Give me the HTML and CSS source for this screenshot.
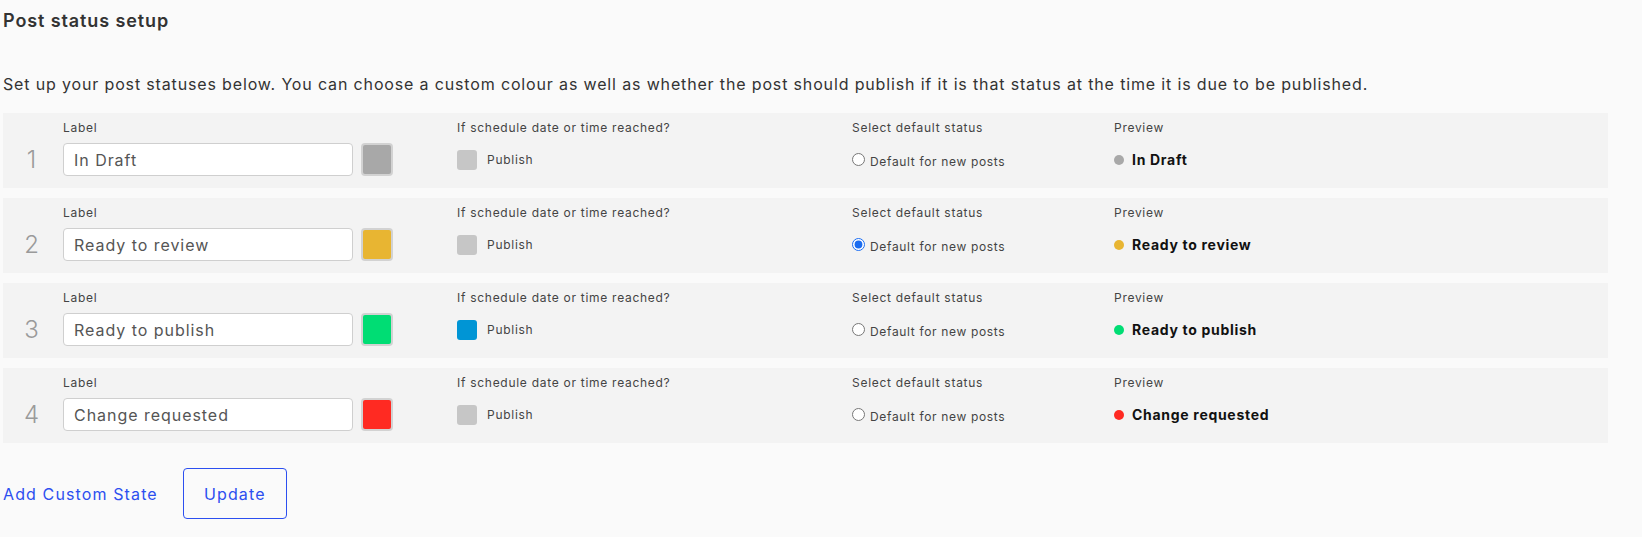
FILE: index.html
```html
<!DOCTYPE html>
<html lang="en">
<head>
<meta charset="utf-8">
<title>Post status setup</title>
<link rel="stylesheet" href="styles.css">
</head>
<body>
<main class="page">
  <h1 class="title">Post status setup</h1>
  <p class="intro">Set up your post statuses below. You can choose a custom colour as well as whether the post should publish if it is that status at the time it is due to be published.</p>

  <div class="status-list">
    <div class="status-row">
      <div class="num">1</div>
      <div class="field">
        <div class="field-label">Label</div>
        <div class="field-control">
          <input class="text-input" type="text" value="In Draft">
          <span class="swatch c-grey"></span>
        </div>
      </div>
      <div class="field">
        <div class="field-label">If schedule date or time reached?</div>
        <div class="field-control">
          <span class="checkbox"></span><span class="check-text">Publish</span>
        </div>
      </div>
      <div class="field">
        <div class="field-label">Select default status</div>
        <div class="field-control">
          <input class="radio" type="radio" name="default"><span class="radio-text">Default for new posts</span>
        </div>
      </div>
      <div class="field">
        <div class="field-label">Preview</div>
        <div class="field-control">
          <span class="dot c-grey"></span><span class="preview-text">In Draft</span>
        </div>
      </div>
    </div>

    <div class="status-row">
      <div class="num">2</div>
      <div class="field">
        <div class="field-label">Label</div>
        <div class="field-control">
          <input class="text-input" type="text" value="Ready to review">
          <span class="swatch c-yellow"></span>
        </div>
      </div>
      <div class="field">
        <div class="field-label">If schedule date or time reached?</div>
        <div class="field-control">
          <span class="checkbox"></span><span class="check-text">Publish</span>
        </div>
      </div>
      <div class="field">
        <div class="field-label">Select default status</div>
        <div class="field-control">
          <input class="radio" type="radio" name="default" checked><span class="radio-text">Default for new posts</span>
        </div>
      </div>
      <div class="field">
        <div class="field-label">Preview</div>
        <div class="field-control">
          <span class="dot c-yellow"></span><span class="preview-text">Ready to review</span>
        </div>
      </div>
    </div>

    <div class="status-row">
      <div class="num">3</div>
      <div class="field">
        <div class="field-label">Label</div>
        <div class="field-control">
          <input class="text-input" type="text" value="Ready to publish">
          <span class="swatch c-green"></span>
        </div>
      </div>
      <div class="field">
        <div class="field-label">If schedule date or time reached?</div>
        <div class="field-control">
          <span class="checkbox is-checked"></span><span class="check-text">Publish</span>
        </div>
      </div>
      <div class="field">
        <div class="field-label">Select default status</div>
        <div class="field-control">
          <input class="radio" type="radio" name="default"><span class="radio-text">Default for new posts</span>
        </div>
      </div>
      <div class="field">
        <div class="field-label">Preview</div>
        <div class="field-control">
          <span class="dot c-green"></span><span class="preview-text">Ready to publish</span>
        </div>
      </div>
    </div>

    <div class="status-row">
      <div class="num">4</div>
      <div class="field">
        <div class="field-label">Label</div>
        <div class="field-control">
          <input class="text-input" type="text" value="Change requested">
          <span class="swatch c-red"></span>
        </div>
      </div>
      <div class="field">
        <div class="field-label">If schedule date or time reached?</div>
        <div class="field-control">
          <span class="checkbox"></span><span class="check-text">Publish</span>
        </div>
      </div>
      <div class="field">
        <div class="field-label">Select default status</div>
        <div class="field-control">
          <input class="radio" type="radio" name="default"><span class="radio-text">Default for new posts</span>
        </div>
      </div>
      <div class="field">
        <div class="field-label">Preview</div>
        <div class="field-control">
          <span class="dot c-red"></span><span class="preview-text">Change requested</span>
        </div>
      </div>
    </div>
  </div>

  <div class="actions">
    <a class="add-link" href="#">Add Custom State</a>
    <button class="update-btn" type="button">Update</button>
  </div>
</main>
</body>
</html>
```

FILE: styles.css
```css
* { box-sizing: border-box; }

html, body {
  margin: 0;
  padding: 0;
  background: #fafafa;
}

body {
  font-family: Inter, "Open Sans", "Liberation Sans", sans-serif;
  color: #333;
}

.page {
  width: 1608px;
  padding: 0 0 0 3px;
}

.title {
  margin: 0;
  padding-top: 10px;
  font-size: 18px;
  line-height: 22px;
  font-weight: 600;
  letter-spacing: 0.05em;
  color: #333;
}

.intro {
  margin: 0;
  padding-top: 41px;
  font-size: 16px;
  line-height: 22px;
  letter-spacing: 0.053em;
  color: #333;
}

.status-list {
  margin-top: 18px;
  display: flex;
  flex-direction: column;
  gap: 10px;
}

.status-row {
  height: 75px;
  background: #f3f3f3;
  display: grid;
  grid-template-columns: 60px 394px 395px 262px 1fr;
  padding-top: 7px;
}

.num {
  padding-top: 23px;
  padding-right: 3px;
  height: 56px;
  line-height: 33px;
  text-align: center;
  font-size: 24px;
  font-weight: 300;
  color: #9a9a9a;
}

.field {
  display: flex;
  flex-direction: column;
  gap: 8px;
}

.field-label {
  height: 15px;
  line-height: 15px;
  font-size: 12px;
  letter-spacing: 0.06em;
  color: #444;
}

.field-control {
  height: 33px;
  display: flex;
  align-items: center;
}

.text-input {
  width: 290px;
  height: 33px;
  border: 1px solid #cfcfcf;
  border-radius: 4px;
  background: #fff;
  padding: 0 10px;
  font-family: inherit;
  font-size: 16px;
  letter-spacing: 0.06em;
  color: #555;
  outline: none;
}

.swatch {
  width: 32px;
  height: 33px;
  margin-left: 8px;
  border: 2px solid #d2d2d2;
  border-radius: 4px;
}

.checkbox {
  width: 20px;
  height: 20px;
  border-radius: 3px;
  background: #c6c6c6;
}

.checkbox.is-checked { background: #0095d5; }

.check-text {
  margin-left: 10px;
  font-size: 12px;
  letter-spacing: 0.06em;
  color: #444;
}

.radio {
  width: 13px;
  height: 13px;
  margin: 0;
  accent-color: #1a6cf0;
}

.radio-text {
  margin-left: 5px;
  padding-top: 4px;
  font-size: 12px;
  letter-spacing: 0.055em;
  color: #444;
}

.dot {
  width: 10px;
  height: 10px;
  border-radius: 50%;
}

.preview-text {
  margin-left: 8px;
  font-size: 14px;
  font-weight: 700;
  letter-spacing: 0.05em;
  color: #111;
}

.c-grey { background: #a8a8a8; }
.c-yellow { background: #e8b532; }
.c-green { background: #00dd74; }
.c-red { background: #ff2a22; }

.actions {
  margin-top: 25px;
  display: flex;
  align-items: center;
  gap: 25px;
}

.add-link {
  font-size: 16px;
  letter-spacing: 0.07em;
  color: #2c4ff0;
  text-decoration: none;
}

.update-btn {
  width: 104px;
  height: 51px;
  border: 1px solid #2c4ff0;
  border-radius: 4px;
  background: #fafafa;
  color: #2c4ff0;
  font-family: inherit;
  font-size: 16px;
  letter-spacing: 0.07em;
}
```
